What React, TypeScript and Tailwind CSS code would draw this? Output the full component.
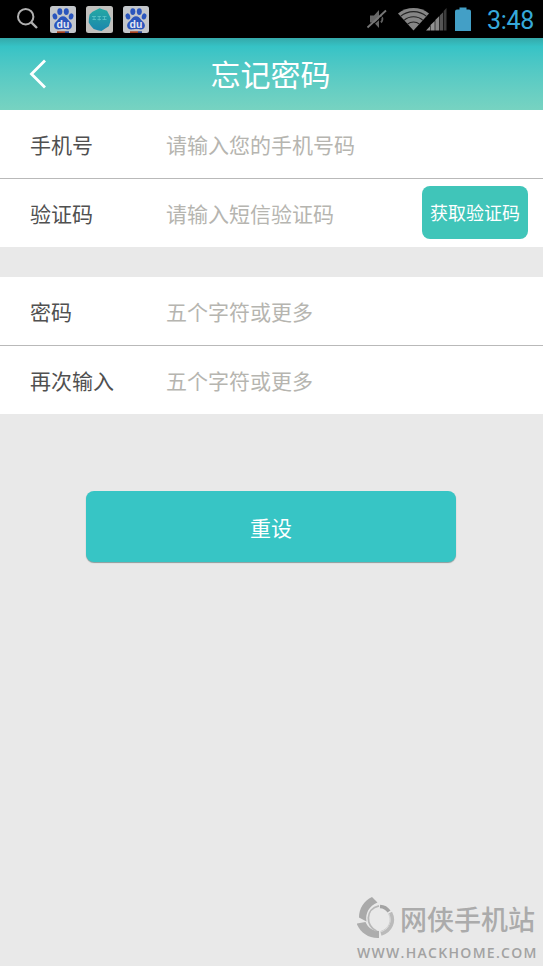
import { useState } from "react";

function BaiduIcon() {
  return (
    <svg width="26" height="27" viewBox="0 0 26 27">
      <rect width="26" height="27" rx="2.5" fill="#c3c6ca" />
      <g fill="#2a55bd">
        <ellipse cx="9.8" cy="5.6" rx="2.5" ry="3.4" />
        <ellipse cx="16.3" cy="5.6" rx="2.5" ry="3.4" />
        <ellipse cx="4.9" cy="10.4" rx="2.3" ry="3.1" transform="rotate(-15 4.9 10.4)" />
        <ellipse cx="21.1" cy="10.4" rx="2.3" ry="3.1" transform="rotate(15 21.1 10.4)" />
        <path d="M13 10.2c2.4 0 3.6 1.6 4.9 3.3 1.6 2 4 3.2 4 6 0 2.6-1.8 4-4.2 4-1.8 0-3-.4-4.7-.4s-2.9.4-4.7.4c-2.4 0-4.2-1.4-4.2-4 0-2.8 2.4-4 4-6 1.3-1.7 2.5-3.3 4.9-3.3z" />
      </g>
      <text
        x="13"
        y="21.8"
        textAnchor="middle"
        fontSize="10.5"
        fontWeight="700"
        fontFamily="Liberation Sans, sans-serif"
        fill="#e3e7f2"
      >
        du
      </text>
      <rect x="7" y="25.3" width="8" height="1.7" fill="#a5411f" />
      <rect x="15" y="25.3" width="4" height="1.7" fill="#27458f" />
    </svg>
  );
}

function AppIcon() {
  return (
    <svg width="27" height="27" viewBox="0 0 27 27">
      <defs>
        <linearGradient id="badge" x1="0" y1="0" x2="0" y2="1">
          <stop offset="0" stopColor="#24a9a4" />
          <stop offset="1" stopColor="#1b86ad" />
        </linearGradient>
      </defs>
      <rect width="27" height="27" rx="2.5" fill="#c1c0bd" />
      <path
        d="M13.5 2.2L17 3.5l4 1.2 1.8 3.6 2 4-.6 3.7-1.4 4.2-3.6 2.3-3.7 2.5-3.8-.7-4-1.3-2.7-3-2.3-3.5.2-4 .7-4.1 2.9-2.6z"
        fill="url(#badge)"
      />
      <path
        d="M6 10.5h4M6.5 13.5h3.5M11.5 10.5h3.5M11.5 13.5h3.5M16.5 10.5h4M16.5 13.5h4M8 10v4M13.2 10v4.5M18.5 10v4"
        stroke="#5cc4c6"
        strokeWidth=".8"
      />
    </svg>
  );
}

function StatusBar() {
  return (
    <div className="flex h-[38px] shrink-0 items-center justify-between bg-black pr-[9px] pl-4">
      <div className="flex items-center gap-[10px]">
        <svg width="24" height="24" viewBox="0 0 24 24" fill="none" stroke="#b0b0b0">
          <circle cx="9.7" cy="9.7" r="7.7" strokeWidth="2" />
          <path d="M15.3 15.3l5.7 5.7" strokeWidth="2.4" />
        </svg>
        <BaiduIcon />
        <AppIcon />
        <BaiduIcon />
      </div>
      <div className="flex items-center">
        <svg width="22" height="24" viewBox="0 0 22 24" className="mr-[10px]">
          <path d="M4 8.500h4l5-5.500v18l-5-5.500H4z" fill="#666" />
          <path d="M15 8.500c1.8 2 1.8 5 0 7" fill="none" stroke="#606060" strokeWidth="2" />
          <path d="M2.500 19.500L18.500 5" stroke="#000" strokeWidth="1.200" transform="translate(1.200 1.400)" />
          <path d="M1.500 20.500L20 3.500" stroke="#777" strokeWidth="1.800" />
        </svg>
        <svg width="31" height="24" viewBox="0 0 31 24" className="-mr-[3px]">
          <path d="M0 6.5C9-.8 22-.8 31 6.500L15.500 23.500z" fill="#858585" />
          <g fill="none" stroke="#222" strokeWidth="1.1">
            <path d="M2.500 9.300c7.500-6.300 18.500-6.300 26 0" />
            <path d="M6 13.300c5.500-4.800 13.500-4.800 19 0" />
            <path d="M9.500 17.200c3.500-3 8.500-3 12 0" />
          </g>
        </svg>
        <svg width="21" height="24" viewBox="0 0 21 24" className="mr-[8px]">
          <path d="M0 23.500l4-4.200v4.200zM4.500 23.500v-5.400L8.700 14v9.500z" fill="#929292" />
          <path d="M9.300 23.500V13l4-4v14.500z" fill="#888" />
          <path d="M13.900 23.500V8.200l3.200-3v18.300z" fill="#555" />
          <path d="M17.700 23.500V4l2.800-3v22.500z" fill="#3c3c3c" />
        </svg>
        <svg width="16" height="24" viewBox="0 0 16 24" className="mr-[16px]">
          <path d="M0 4.500q0-2 2-2h2.500V.5h7v2H14q2 0 2 2V24H0z" fill="#439fc6" />
        </svg>
        <span className="relative top-px font-[Roboto,sans-serif] text-[25px] leading-none tracking-[-0.3px] text-[#36a9da]">
          3:48
        </span>
      </div>
    </div>
  );
}

interface FieldProps {
  label: string;
  placeholder: string;
  type?: string;
  value: string;
  onChange: (value: string) => void;
  children?: React.ReactNode;
}

function Field({ label, placeholder, type = "text", value, onChange, children }: FieldProps) {
  return (
    <div className="box-content flex h-[68px] items-center bg-white">
      <label className="w-[166px] shrink-0 pt-px pl-[30px] text-[21px] text-[#505050]">
        {label}
      </label>
      <input
        type={type}
        aria-label={label}
        value={value}
        onChange={(e) => onChange(e.target.value)}
        placeholder={placeholder}
        className="h-full min-w-0 flex-1 pb-px text-[21px] text-[#505050] placeholder:text-[#b6b5b0] focus:outline-none"
      />
      {children}
    </div>
  );
}

function Watermark() {
  return (
    <div className="flex w-[182px] flex-col">
      <div className="flex items-center">
        <svg width="38" height="42" viewBox="0 0 38 42" className="mr-[5px]">
          <path d="M15 0l5.500 5.500C12 9 8 16.500 9.500 24.500L2 20.500C2 11.500 7 3.500 15 0z" fill="#a9a9a9" />
          <path d="M-.5 26.500L8.500 25C11 31 16 34 22 34v7C11.500 41.500 3.500 36 -.5 26.500z" fill="#adadad" />
          <g fill="none">
            <path d="M22 8.800c-14 3-13.500 20.500-2.500 25.200" stroke="#b8b8b8" strokeWidth="1.800" />
            <path d="M23 9.500c4 .2 7 2 9 5" stroke="#a3a3a3" strokeWidth="3.600" />
            <path d="M33.500 15.500c4.500 8.500.5 18.500-9.500 21.500" stroke="#bababa" strokeWidth="3.500" />
            <path d="M31.500 16.500c4 7 .5 15.500-8 18" stroke="#cdcdcd" strokeWidth="1" />
          </g>
        </svg>
        <span className="relative top-px text-[27px] leading-[42px] font-medium whitespace-nowrap text-[#ababab]">
          网侠手机站
        </span>
      </div>
      <span className="mt-[5px] font-['Open_Sans',sans-serif] text-[14px] leading-[18px] font-semibold tracking-[1.3px] whitespace-nowrap text-[#a2a2a2]">
        WWW.HACKHOME.COM
      </span>
    </div>
  );
}

export default function App() {
  const [phone, setPhone] = useState("");
  const [code, setCode] = useState("");
  const [password, setPassword] = useState("");
  const [confirm, setConfirm] = useState("");

  const handleSubmit = (e: React.FormEvent) => {
    e.preventDefault();
  };

  return (
    <div className="flex h-[966px] w-[543px] flex-col overflow-hidden bg-[#e9e9e9] font-['Noto_Sans_CJK_SC',sans-serif]">
      <StatusBar />
      <header className="grid h-[72px] shrink-0 grid-cols-[76px_1fr_78px] items-center bg-linear-to-b from-[#34a9aa] from-0% via-[#36c3c6] via-12% to-[#77d3c1] to-100% text-white">
        <button type="button" aria-label="返回" className="pl-[29px]">
          <svg width="18" height="30" viewBox="0 0 18 30" fill="none" stroke="currentColor">
            <path d="M16 1.500L2.500 15 16 28.500" strokeWidth="2.800" />
          </svg>
        </button>
        <h1 className="pb-[3px] text-center text-[30px] leading-none">忘记密码</h1>
      </header>
      <form onSubmit={handleSubmit} className="flex flex-col">
        <div className="divide-y divide-[#b9b9b9]">
          <Field label="手机号" placeholder="请输入您的手机号码" value={phone} onChange={setPhone} />
          <Field label="验证码" placeholder="请输入短信验证码" value={code} onChange={setCode}>
            <button
              type="button"
              className="mr-[15px] mb-0.5 h-[53px] w-[106px] shrink-0 rounded-lg bg-[#40c5b9] text-[18px] whitespace-nowrap text-white"
            >
              获取验证码
            </button>
          </Field>
        </div>
        <div className="mt-[30px] divide-y divide-[#b9b9b9]">
          <Field
            label="密码"
            placeholder="五个字符或更多"
            type="password"
            value={password}
            onChange={setPassword}
          />
          <Field
            label="再次输入"
            placeholder="五个字符或更多"
            type="password"
            value={confirm}
            onChange={setConfirm}
          />
        </div>
        <button
          type="submit"
          className="mt-[77px] ml-[86px] h-[71px] w-[370px] rounded-lg bg-[#37c5c5] pt-0.5 text-[21px] text-white shadow-[0_1px_1px_#8a9c9c]"
        >
          重设
        </button>
      </form>
      <footer className="mt-auto flex justify-end pr-[4px] pb-[4px]">
        <Watermark />
      </footer>
    </div>
  );
}
